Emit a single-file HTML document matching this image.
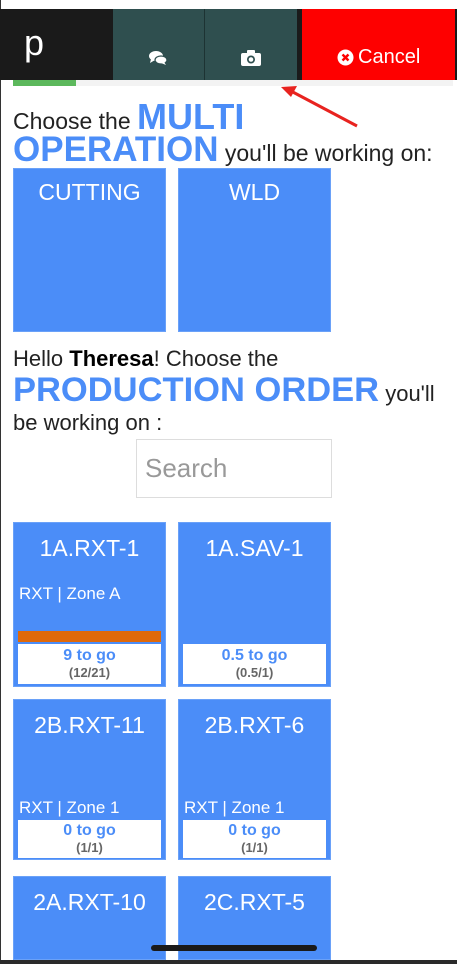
<!DOCTYPE html>
<html style="overflow:hidden;height:964px"><head><meta charset="utf-8"><style>
*{margin:0;padding:0;box-sizing:border-box}
body{width:457px;height:964px;overflow:hidden;background:#fff;position:relative;font-family:"Liberation Sans",sans-serif;color:#222}
.abs{position:absolute}
.t{position:absolute;white-space:nowrap;color:#222}
.b{color:#4b8df8;font-weight:bold}
.tile{position:absolute;background:#4b8df8;border:1px solid #6aa1f8;color:#fff;text-align:center;overflow:hidden}
.tile .n{position:absolute;left:0;right:0;top:12px;font-size:23px;font-weight:300}
.tile .z{position:absolute;left:5px;font-size:17px;text-align:left}
.wb{position:absolute;left:4px;right:4px;background:#fff;text-align:center;font-weight:bold}
.wb .g{color:#4b8df8;font-size:16px;line-height:19px;margin-top:2px}
.wb .c{color:#666;font-size:13px;line-height:15px}
</style></head><body>
<div class="abs" style="left:0;top:0;width:1px;height:964px;background:#333"></div>
<div class="abs" style="left:0;top:9px;width:113px;height:71px;background:#1a1a1a"></div>
<div class="t" style="left:24px;top:22px;font-size:36px;color:#fff;font-weight:300">p</div>
<div class="abs" style="left:113px;top:9px;width:91px;height:71px;background:#2f4f4f"></div>
<div class="abs" style="left:204px;top:9px;width:1px;height:71px;background:#1d3333"></div>
<div class="abs" style="left:205px;top:9px;width:92px;height:71px;background:#2f4f4f"></div>
<div class="abs" style="left:297px;top:9px;width:5px;height:71px;background:#1a1a1a"></div>
<div class="abs" style="left:302px;top:9px;width:153px;height:71px;background:#fe0000"></div>
<div class="abs" style="left:455px;top:9px;width:2px;height:71px;background:#1a1a1a"></div>
<svg class="abs" style="left:148px;top:50px" width="20" height="16" viewBox="0 0 20 16"><ellipse cx="8" cy="6" rx="7" ry="5" fill="#fff"/><path d="M3 9 L2 13 L7 10Z" fill="#fff"/><ellipse cx="13" cy="10" rx="6" ry="4" fill="#fff" stroke="#2f4f4f" stroke-width="1.2"/><path d="M16 12 L18 15 L13 13Z" fill="#fff"/></svg>
<svg class="abs" style="left:240px;top:49px" width="22" height="18" viewBox="0 0 22 18"><rect x="1" y="4" width="20" height="13" rx="2" fill="#fff"/><rect x="7" y="1" width="8" height="4" rx="1" fill="#fff"/><circle cx="11" cy="10.5" r="4" fill="#2f4f4f"/><circle cx="11" cy="10.5" r="2.3" fill="#fff"/></svg>
<svg class="abs" style="left:337px;top:49px" width="17" height="17" viewBox="0 0 17 17"><circle cx="8.5" cy="8.5" r="8" fill="#fff"/><path d="M5.5 5.5L11.5 11.5M11.5 5.5L5.5 11.5" stroke="#fe0000" stroke-width="2.4"/></svg>
<div class="t" style="left:358px;top:46px;font-size:20px;color:#fff">Cancel</div>
<div class="abs" style="left:13px;top:80px;width:440px;height:6px;background:#f3f3f3"></div>
<div class="abs" style="left:13px;top:80px;width:63px;height:6px;background:#5cb85c"></div>
<svg class="abs" style="left:275px;top:80px" width="90" height="55"><line x1="82" y1="46" x2="14" y2="10" stroke="#e8231f" stroke-width="3"/><path d="M6 7 L22 6 L16 17Z" fill="#e8231f"/></svg>

<div class="t" style="left:13px;top:103px;font-size:23px;line-height:28px">Choose the <span class="b" style="font-size:36px">MULTI</span></div>
<div class="t" style="left:13px;top:131px;font-size:23px;line-height:38px"><span class="b" style="font-size:35px">OPERATION</span> you'll be working on:</div>

<div class="tile" style="left:13px;top:168px;width:153px;height:164px"><div class="n" style="top:10px">CUTTING</div></div>
<div class="tile" style="left:178px;top:168px;width:153px;height:164px"><div class="n" style="top:10px">WLD</div></div>

<div class="t" style="left:13px;top:346px;font-size:22px">Hello <b style="color:#000">Theresa</b>! Choose the</div>
<div class="t" style="left:13px;top:370px;font-size:22px;line-height:40px"><span class="b" style="font-size:34.5px">PRODUCTION ORDER</span> you'll</div>
<div class="t" style="left:13px;top:410px;font-size:22px">be working on :</div>
<div class="abs" style="left:136px;top:439px;width:196px;height:59px;border:1px solid #ddd"></div>
<div class="t" style="left:145px;top:453px;font-size:26px;color:#999">Search</div>

<div class="tile" style="left:13px;top:522px;width:153px;height:165px"><div class="n">1A.RXT-1</div><div class="z" style="top:61px">RXT | Zone A</div><div class="abs" style="left:4px;right:4px;top:108px;height:11px;background:#e0690b"></div><div class="wb" style="top:121px;height:40px"><div class="g">9 to go</div><div class="c">(12/21)</div></div></div>
<div class="tile" style="left:178px;top:522px;width:153px;height:165px"><div class="n">1A.SAV-1</div><div class="wb" style="top:121px;height:40px"><div class="g">0.5 to go</div><div class="c">(0.5/1)</div></div></div>

<div class="tile" style="left:13px;top:699px;width:153px;height:161px"><div class="n">2B.RXT-11</div><div class="z" style="top:98px">RXT | Zone 1</div><div class="wb" style="top:120px;height:38px"><div class="g" style="margin-top:1px">0 to go</div><div class="c">(1/1)</div></div></div>
<div class="tile" style="left:178px;top:699px;width:153px;height:161px"><div class="n">2B.RXT-6</div><div class="z" style="top:98px">RXT | Zone 1</div><div class="wb" style="top:120px;height:38px"><div class="g" style="margin-top:1px">0 to go</div><div class="c">(1/1)</div></div></div>

<div class="tile" style="left:13px;top:876px;width:153px;height:84px"><div class="n">2A.RXT-10</div></div>
<div class="tile" style="left:178px;top:876px;width:153px;height:84px"><div class="n">2C.RXT-5</div></div>

<div class="abs" style="left:151px;top:945px;width:166px;height:6px;border-radius:3px;background:#1a1a1a"></div>
<div class="abs" style="left:0;top:960px;width:457px;height:4px;background:#2a2a2a"></div>
</body></html>
